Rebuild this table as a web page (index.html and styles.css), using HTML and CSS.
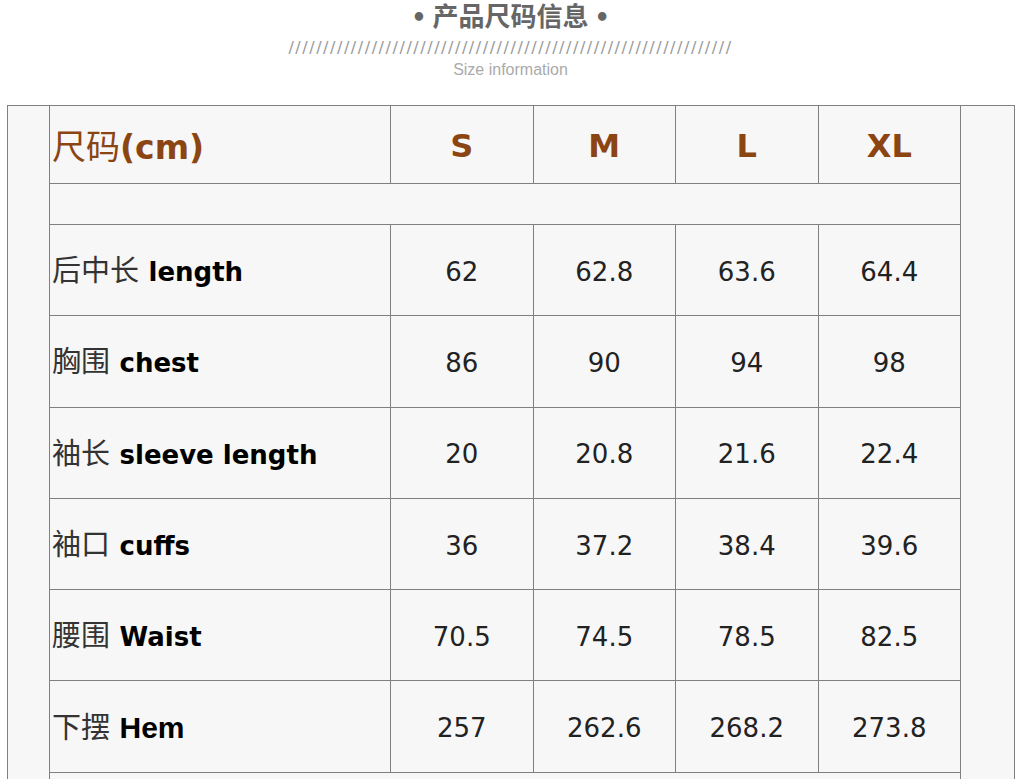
FILE: index.html
```html
<!DOCTYPE html>
<html lang="zh">
<head>
<meta charset="utf-8">
<title>产品尺码信息</title>
<link rel="stylesheet" href="styles.css">
</head>
<body>
<header class="heading">
  <h2 class="heading-title"><span class="dot">•</span> 产品尺码信息 <span class="dot">•</span></h2>
  <div class="heading-slashes">////////////////////////////////////////////////////////////////</div>
  <div class="heading-sub">Size information</div>
</header>
<section class="sheet">
  <table class="size-table">
    <colgroup>
      <col class="c-label"><col class="c-size"><col class="c-size"><col class="c-size"><col class="c-size">
    </colgroup>
    <thead>
      <tr class="row-head">
        <th class="label-head">尺码<b>(cm)</b></th>
        <th>S</th><th>M</th><th>L</th><th>XL</th>
      </tr>
    </thead>
    <tbody>
      <tr class="row-gap"><td colspan="5"></td></tr>
      <tr class="row"><td class="label">后中长 <b>length</b></td><td>62</td><td>62.8</td><td>63.6</td><td>64.4</td></tr>
      <tr class="row"><td class="label">胸围 <b>chest</b></td><td>86</td><td>90</td><td>94</td><td>98</td></tr>
      <tr class="row"><td class="label">袖长 <b>sleeve length</b></td><td>20</td><td>20.8</td><td>21.6</td><td>22.4</td></tr>
      <tr class="row"><td class="label">袖口 <b>cuffs</b></td><td>36</td><td>37.2</td><td>38.4</td><td>39.6</td></tr>
      <tr class="row"><td class="label">腰围 <b>Waist</b></td><td>70.5</td><td>74.5</td><td>78.5</td><td>82.5</td></tr>
      <tr class="row"><td class="label">下摆 <b class="arial">Hem</b></td><td>257</td><td>262.6</td><td>268.2</td><td>273.8</td></tr>
      <tr class="row-gap"><td colspan="5"></td></tr>
    </tbody>
  </table>
</section>
</body>
</html>
```
FILE: styles.css
```css
html, body {
  margin: 0;
  padding: 0;
  background: #fff;
}
body {
  font-family: "DejaVu Sans", "Noto Sans CJK SC", sans-serif;
  overflow: hidden;
}
.heading {
  height: 105px;
  width: 1021px;
  text-align: center;
  box-sizing: border-box;
}
.heading-title {
  margin: 0;
  font-family: "Noto Sans CJK SC", sans-serif;
  font-size: 26px;
  line-height: 30px;
  font-weight: 700;
  color: #666;
}
.heading-title .dot {
  font-family: "DejaVu Sans", sans-serif;
  font-size: 24px;
}
.heading-slashes {
  margin-top: 6px;
  font-family: "DejaVu Sans", sans-serif;
  font-size: 16px;
  line-height: 18px;
  letter-spacing: 1.55px;
  color: #9a9a9a;
}
.heading-sub {
  margin-top: 4px;
  font-family: "Liberation Sans", sans-serif;
  font-size: 16px;
  line-height: 18px;
  color: #aaa;
}
.sheet {
  margin-left: 7px;
  width: 1008px;
  box-sizing: border-box;
  border: 1px solid #808080;
  border-bottom: none;
  background: #f7f7f7;
  padding: 0 53px 0 41px;
  height: 700px;
}
.size-table {
  margin-top: -1px;
  width: 911px;
  table-layout: fixed;
  border-collapse: collapse;
  background: #f7f7f7;
}
.c-label { width: 341px; }
.c-size { width: 142.5px; }
.size-table th,
.size-table td {
  border: 1px solid #808080;
  padding: 0;
  text-align: center;
  vertical-align: middle;
}
.size-table th {
  font-size: 32px;
  font-weight: 700;
  color: #8b4513;
  padding-top: 3px;
}
.row-head { height: 78px; }
.row-gap { height: 41px; }
.row { height: 91.3px; }
.size-table th.label-head {
  text-align: left;
  padding: 0 0 0 2px;
  font-family: "Noto Sans CJK SC", sans-serif;
  font-weight: 400;
  font-size: 34px;
}
.label-head b {
  font-family: "DejaVu Sans", sans-serif;
  font-weight: 700;
  font-size: 33px;
}
.size-table td {
  font-size: 26px;
  color: #222;
  padding-top: 3px;
}
.size-table td.label {
  text-align: left;
  padding: 0 0 4px 2px;
  font-family: "Noto Sans CJK SC", sans-serif;
  font-weight: 400;
  font-size: 29px;
  word-spacing: 3px;
  color: #333;
}
.label b {
  font-family: "DejaVu Sans", sans-serif;
  font-weight: 700;
  font-size: 26px;
  word-spacing: normal;
  color: #000;
}
.label b.arial {
  font-family: "Liberation Sans", sans-serif;
  font-size: 30px;
}
```
